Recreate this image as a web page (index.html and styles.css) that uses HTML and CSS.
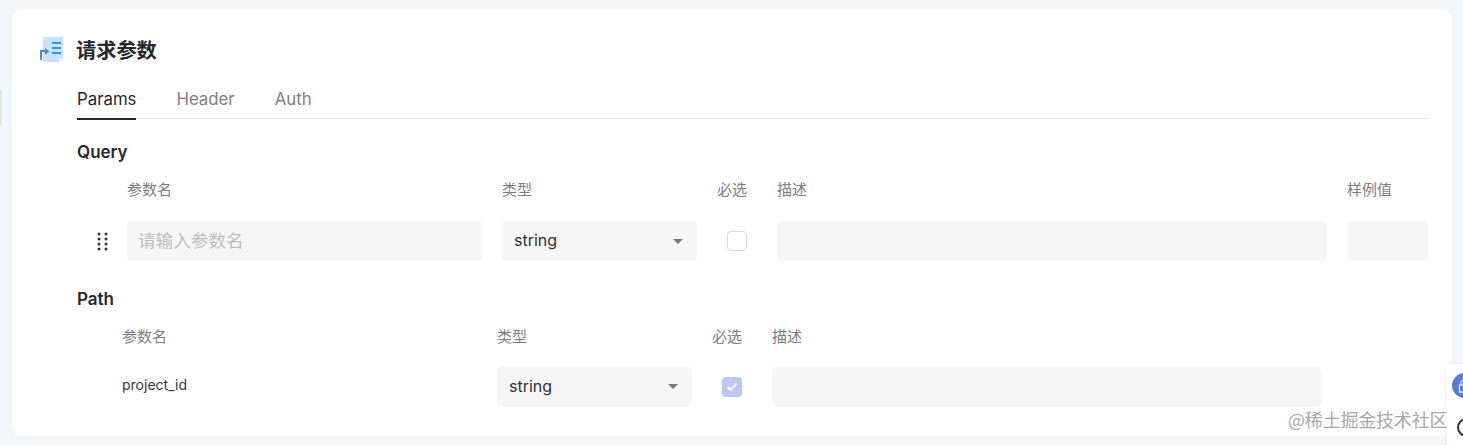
FILE: index.html
```html
<!DOCTYPE html>
<html>
  <head>
    <meta charset="utf-8">
    <title>请求参数</title>
    <link rel="stylesheet" href="styles.css">
  </head>
  <body>
    <div class="side-tab"></div>

    <div class="card">
      <div class="title">
        <svg class="title-icon" width="26" height="26" viewBox="0 0 26 26">
          <path d="M4 0h20v21l-4 4H4z" fill="#c5e4fb"/>
          <path d="M20 25v-4h4z" fill="#e6f3fd"/>
          <path d="M13 6h9M13 11h9M13 16h9" stroke="#3f8fe0" stroke-width="2" fill="none"/>
          <path d="M2 23v-9h5" stroke="#3f8fe0" stroke-width="2" fill="none"/>
          <path d="M6 11l4.500 3.500-4.500 3.500z" fill="#3f8fe0"/>
        </svg>
        <h2>请求参数</h2>
      </div>

      <div class="tabs">
        <div class="tab active">Params</div>
        <div class="tab">Header</div>
        <div class="tab">Auth</div>
      </div>

      <h3 class="section query-title">Query</h3>
      <div class="params query">
        <div></div>
        <div class="label">参数名</div>
        <div class="label">类型</div>
        <div class="label">必选</div>
        <div class="label">描述</div>
        <div class="label">样例值</div>

        <svg class="drag" width="11" height="19" viewBox="0 0 11 19">
          <g fill="#333">
            <circle cx="2" cy="2" r="1.500"/><circle cx="9" cy="2" r="1.500"/>
            <circle cx="2" cy="7" r="1.500"/><circle cx="9" cy="7" r="1.500"/>
            <circle cx="2" cy="12" r="1.500"/><circle cx="9" cy="12" r="1.500"/>
            <circle cx="2" cy="17" r="1.500"/><circle cx="9" cy="17" r="1.500"/>
          </g>
        </svg>
        <div class="field placeholder">请输入参数名</div>
        <div class="field select">string<span class="caret"></span></div>
        <div class="check-cell"><span class="check"></span></div>
        <div class="field"></div>
        <div class="field"></div>
      </div>

      <h3 class="section path-title">Path</h3>
      <div class="params path">
        <div></div>
        <div class="label">参数名</div>
        <div class="label">类型</div>
        <div class="label">必选</div>
        <div class="label">描述</div>

        <div></div>
        <div class="param-name">project_id</div>
        <div class="field select">string<span class="caret"></span></div>
        <div class="check-cell">
          <span class="check checked">
            <svg width="12" height="10" viewBox="0 0 12 10"><path d="M1.500 5l3.200 3 5.800-6.500" stroke="#fff" stroke-width="1.800" fill="none"/></svg>
          </span>
        </div>
        <div class="field"></div>
      </div>
    </div>

    <div class="float-panel">
      <span class="float-blue">
        <svg width="14" height="14" viewBox="0 0 14 14"><path d="M3 6V4a3 3 0 0 1 6 0M1.500 6h9v7h-9z" stroke="#dbe6ff" stroke-width="1.300" fill="none"/></svg>
      </span>
      <span class="float-ring"></span>
    </div>
    <div class="watermark">@稀土掘金技术社区</div>
  </body>
</html>
```

FILE: styles.css
```css
html, body {
  height: 100%;
}

body {
  margin: 0;
  padding: 10px 11px 9px 12px;
  box-sizing: border-box;
  overflow: hidden;
  background: #f5f6f9;
  color: #25262e;
  font-family: Inter, "Noto Sans CJK SC", sans-serif;
}

.side-tab {
  position: absolute;
  left: 0;
  top: 90px;
  width: 2px;
  height: 35px;
  background: #e4e4e6;
}

.card {
  height: 426px;
  padding: 0 24px 0 65px;
  box-sizing: border-box;
  background: #fff;
  border-radius: 10px;
}

.title {
  display: flex;
  align-items: center;
  height: 80px;
}
.title-icon {
  flex: none;
  margin-left: -38px;
  margin-right: 12px;
}
.title h2 {
  margin: 0 0 0 -1px;
  padding-top: 2px;
  font-size: 20.2px;
  line-height: 28px;
  font-weight: 600;
}

.tabs {
  display: flex;
  gap: 40px;
  height: 28px;
  border-bottom: 1px solid #e9e9eb;
}
.tab {
  height: 30px;
  font-size: 16.8px;
  line-height: 18px;
  color: #7d7e85;
  box-sizing: border-box;
}
.tab.active {
  color: #25262e;
  border-bottom: 2px solid #25262e;
}

.section {
  margin: 0;
  font-size: 17px;
  line-height: 20px;
  font-weight: 600;
}
.query-title {
  margin-top: 23px;
}
.path-title {
  margin-top: 28px;
}

.params {
  display: grid;
  column-gap: 20px;
  align-items: center;
}
.query {
  grid-template-columns: 30px 355px 195px 40px 550px 81px;
  grid-template-rows: 38px 40px;
  margin-top: 9px;
  row-gap: 12px;
}
.path {
  grid-template-columns: 25px 355px 195px 40px 550px;
  grid-template-rows: 28px 41px;
  margin-top: 14px;
  row-gap: 15px;
}

.label {
  font-size: 15px;
  line-height: 20px;
  color: #7d7e85;
  white-space: nowrap;
}

.drag {
  justify-self: end;
  margin-right: -1px;
}

.field {
  display: flex;
  align-items: center;
  height: 100%;
  padding: 0 11px 2px;
  box-sizing: border-box;
  background: #f6f6f7;
  border-radius: 4px;
  font-size: 16px;
  color: #303136;
}
.placeholder {
  padding-bottom: 4px;
  font-size: 17.6px;
  color: #bdbdc0;
}
.select {
  justify-content: space-between;
  padding-left: 12px;
  padding-right: 14px;
}
.path .field {
  border-radius: 6px;
}
.caret {
  width: 0;
  height: 0;
  margin-top: 2px;
  border-left: 5px solid transparent;
  border-right: 5px solid transparent;
  border-top: 5px solid #76777e;
}

.check-cell {
  display: flex;
  justify-content: center;
}
.check {
  display: flex;
  align-items: center;
  justify-content: center;
  width: 20px;
  height: 20px;
  box-sizing: border-box;
  border: 1px solid #d9d9dc;
  border-radius: 4px;
  background: #fff;
}
.check.checked {
  border: 0;
  background: #bac8f6;
}

.param-name {
  margin-bottom: 4px;
  font-size: 14px;
  line-height: 17px;
  color: #35363b;
}

.float-panel {
  position: absolute;
  left: 1447px;
  top: 364px;
  width: 40px;
  height: 90px;
  background: #fff;
  border-radius: 4px 0 0 0;
  box-shadow: 0 0 6px rgba(0, 0, 0, 0.08);
}
.float-blue {
  position: absolute;
  left: 5px;
  top: 9px;
  display: flex;
  align-items: center;
  justify-content: center;
  width: 25px;
  height: 25px;
  border-radius: 50%;
  background: #5b7bd5;
}
.float-ring {
  position: absolute;
  left: 10px;
  top: 54px;
  width: 19px;
  height: 19px;
  box-sizing: border-box;
  border: 2px solid #333;
  border-radius: 50%;
}

.watermark {
  position: absolute;
  left: 1288px;
  top: 406px;
  font-family: "Noto Sans CJK SC", sans-serif;
  font-size: 18px;
  line-height: 26px;
  letter-spacing: -0.2px;
  color: #a8a8a8;
  white-space: nowrap;
}
```
